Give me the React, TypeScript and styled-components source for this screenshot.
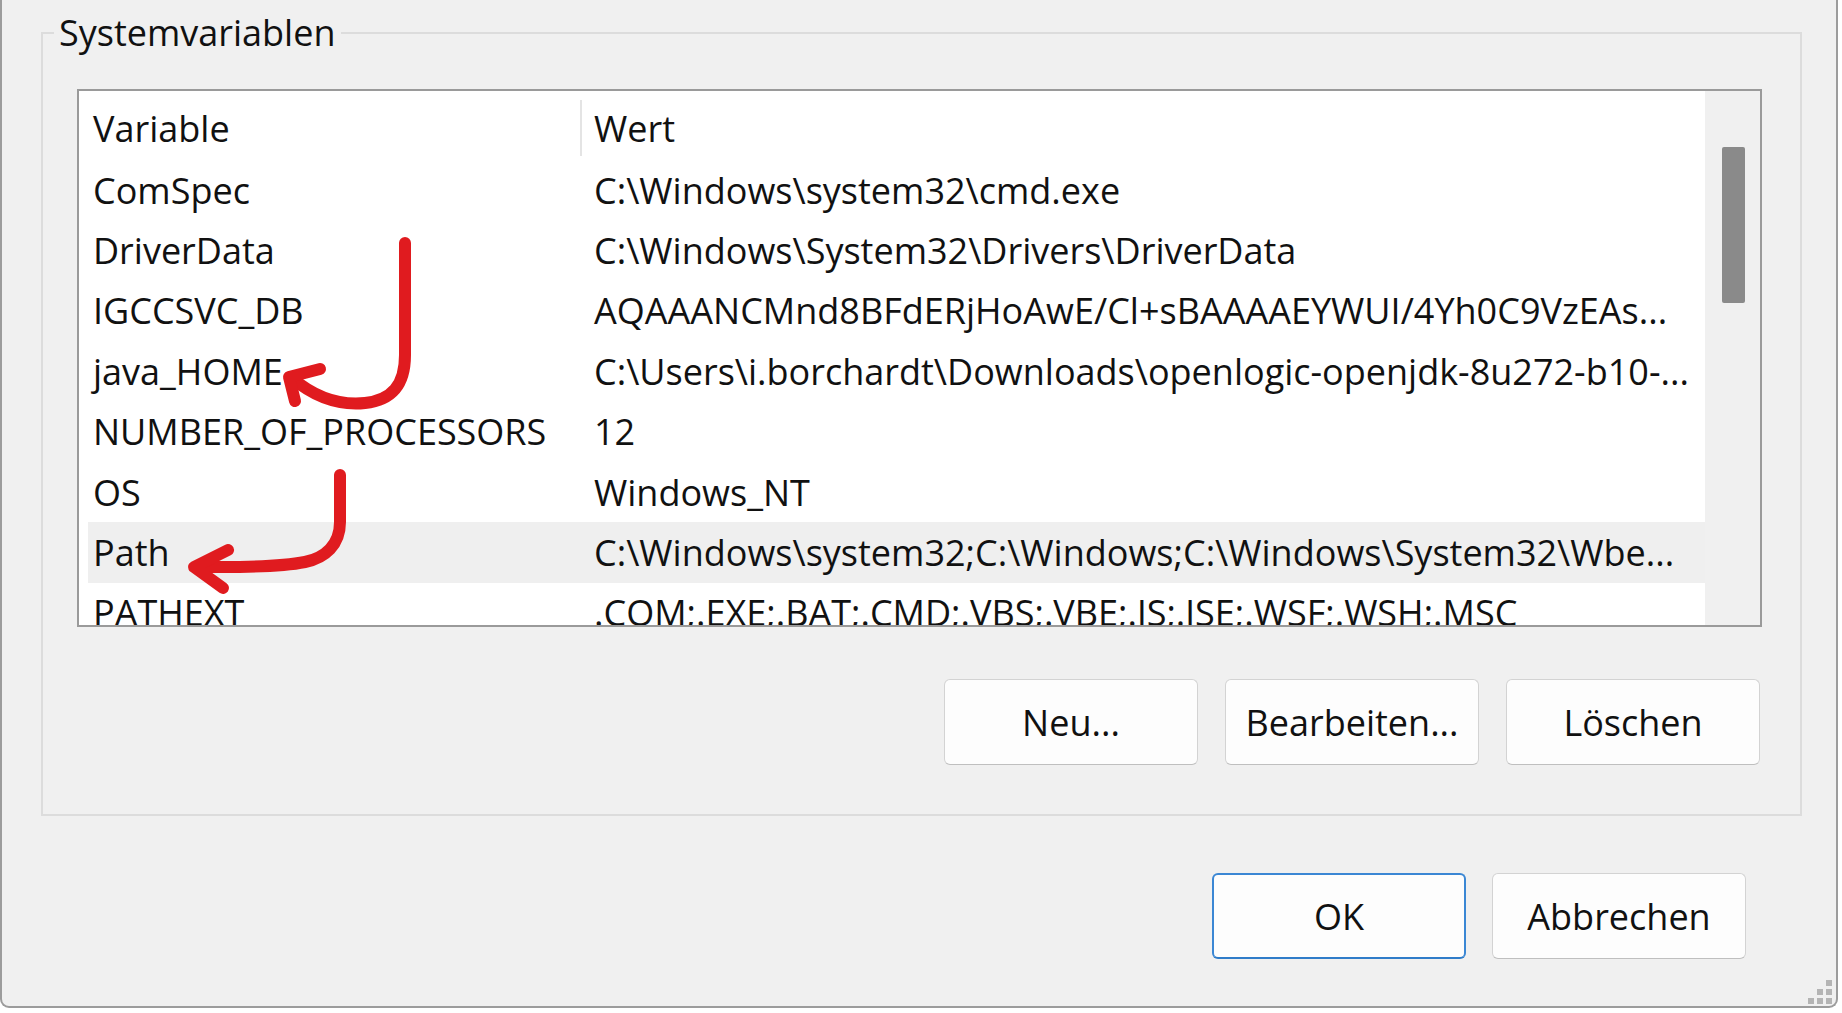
import React from "react";
import styled, { createGlobalStyle } from "styled-components";

const GlobalStyle = createGlobalStyle`
  *, *::before, *::after { box-sizing: border-box; }
  html, body { margin: 0; padding: 0; background: #ffffff; }
  body {
    font-family: "Open Sans", "Noto Sans", "DejaVu Sans", sans-serif;
    color: #111111;
  }
`;

const Page = styled.div`
  position: relative;
  width: 1842px;
  height: 1013px;
  overflow: hidden;
`;

const Window = styled.div`
  width: 1838px;
  height: 1008px;
  background: #f0f0f0;
  border: 2px solid #9c9c9c;
  border-top: none;
  border-radius: 0 0 9px 9px;
  padding: 13px 34px 0 39px;
  display: flex;
  flex-direction: column;
`;

const Group = styled.fieldset`
  margin: 0;
  min-width: 0;
  border: 2px solid #dcdcdc;
  padding: 36px 38px 49px 34px;
`;

const GroupTitle = styled.legend`
  margin-left: -23px;
  padding: 0 5px;
  font-size: 36px;
  line-height: 40px;
  color: #111111;
`;

const ListBox = styled.div`
  height: 538px;
  border: 2px solid #9a9a9a;
  background: #ffffff;
  display: flex;
  overflow: hidden;
`;

const ListContent = styled.div`
  flex: 1;
  min-width: 0;
  display: flex;
  flex-direction: column;
  overflow: hidden;
`;

const HeaderRow = styled.div`
  flex: none;
  height: 69px;
  padding-top: 5px;
  display: grid;
  grid-template-columns: 501px 1fr;
  align-items: center;
  font-size: 36px;
`;

const HeaderCell = styled.div<{ $divider?: boolean }>`
  height: 56px;
  display: flex;
  align-items: center;
  padding-left: ${(p) => (p.$divider ? "12px" : "14px")};
  border-left: ${(p) => (p.$divider ? "2px solid #e4e4e4" : "none")};
  white-space: nowrap;
`;

const Row = styled.div<{ $selected?: boolean }>`
  flex: none;
  height: 60.4px;
  margin-left: 9px;
  display: grid;
  grid-template-columns: 492px 1fr;
  align-items: center;
  font-size: 36px;
  background: ${(p) => (p.$selected ? "#efefef" : "transparent")};
`;

const Cell = styled.div<{ $value?: boolean }>`
  min-width: 0;
  padding-left: ${(p) => (p.$value ? "14px" : "5px")};
  padding-right: 12px;
  white-space: nowrap;
  overflow: hidden;
  text-overflow: ellipsis;
`;

const Track = styled.div`
  flex: none;
  width: 55px;
  background: #f0f0f0;
  padding: 56px 0 0 17px;
`;

const Thumb = styled.div`
  width: 23px;
  height: 156px;
  background: #8a8a8a;
  border-radius: 2px;
`;

const ButtonRow = styled.div`
  display: flex;
  justify-content: flex-end;
  gap: 27px;
  margin-top: 52px;
  padding-right: 2px;
`;

const Footer = styled.div`
  display: flex;
  justify-content: flex-end;
  gap: 26px;
  margin-top: 57px;
  padding-right: 56px;
`;

const Button = styled.button<{ $primary?: boolean }>`
  width: 254px;
  height: 86px;
  background: #fdfdfd;
  border: ${(p) => (p.$primary ? "2px solid #3b87d4" : "1px solid #d3d3d3")};
  border-bottom-color: ${(p) => (p.$primary ? "#2f7cc9" : "#bfbfbf")};
  border-radius: 6px;
  font-family: "Open Sans", "Noto Sans", sans-serif;
  font-size: 36px;
  color: #111111;
  padding: 0;
  display: flex;
  align-items: center;
  justify-content: center;
`;

const Overlay = styled.svg`
  position: absolute;
  top: 0;
  left: 0;
  pointer-events: none;
`;

const Grip = styled.svg`
  position: absolute;
  left: 1806px;
  top: 978px;
`;

type Variable = { name: string; value: string; selected?: boolean };

const variables: Variable[] = [
  { name: "ComSpec", value: "C:\\Windows\\system32\\cmd.exe" },
  { name: "DriverData", value: "C:\\Windows\\System32\\Drivers\\DriverData" },
  { name: "IGCCSVC_DB", value: "AQAAANCMnd8BFdERjHoAwE/Cl+sBAAAAEYWUI/4Yh0C9VzEAs..." },
  { name: "java_HOME", value: "C:\\Users\\i.borchardt\\Downloads\\openlogic-openjdk-8u272-b10-..." },
  { name: "NUMBER_OF_PROCESSORS", value: "12" },
  { name: "OS", value: "Windows_NT" },
  { name: "Path", value: "C:\\Windows\\system32;C:\\Windows;C:\\Windows\\System32\\Wbe...", selected: true },
  { name: "PATHEXT", value: ".COM;.EXE;.BAT;.CMD;.VBS;.VBE;.JS;.JSE;.WSF;.WSH;.MSC" },
];

export default function App() {
  return (
    <Page>
      <GlobalStyle />
      <Window>
        <Group>
          <GroupTitle>Systemvariablen</GroupTitle>
          <ListBox>
            <ListContent>
              <HeaderRow>
                <HeaderCell>Variable</HeaderCell>
                <HeaderCell $divider>Wert</HeaderCell>
              </HeaderRow>
              {variables.map((v) => (
                <Row key={v.name} $selected={v.selected}>
                  <Cell>{v.name}</Cell>
                  <Cell $value>{v.value}</Cell>
                </Row>
              ))}
            </ListContent>
            <Track>
              <Thumb />
            </Track>
          </ListBox>
          <ButtonRow>
            <Button>Neu...</Button>
            <Button>Bearbeiten...</Button>
            <Button>Löschen</Button>
          </ButtonRow>
        </Group>
        <Footer>
          <Button $primary>OK</Button>
          <Button>Abbrechen</Button>
        </Footer>
      </Window>
      <Grip width="30" height="28" viewBox="0 0 30 28">
        <g fill="#b4b4b4">
          <rect x="20" y="2" width="6" height="6" />
          <rect x="11" y="11" width="6" height="6" />
          <rect x="20" y="11" width="6" height="6" />
          <rect x="2" y="20" width="6" height="6" />
          <rect x="11" y="20" width="6" height="6" />
          <rect x="20" y="20" width="6" height="6" />
        </g>
      </Grip>
      <Overlay width="1842" height="1013" viewBox="0 0 1842 1013">
        <g fill="none" stroke="#e01b1f" strokeWidth="12" strokeLinecap="round" strokeLinejoin="round">
          <path d="M 405 243 L 405 355 C 405 385 392 400 365 403 C 335 406 312 395 292 378" />
          <path d="M 320 369 L 289 377 L 295 401" />
          <path d="M 340 475 L 340 522 C 340 545 325 558 305 562 C 285 566 250 567 222 567 L 196 567" />
          <path d="M 228 550 L 194 567 L 223 588" />
        </g>
      </Overlay>
    </Page>
  );
}
